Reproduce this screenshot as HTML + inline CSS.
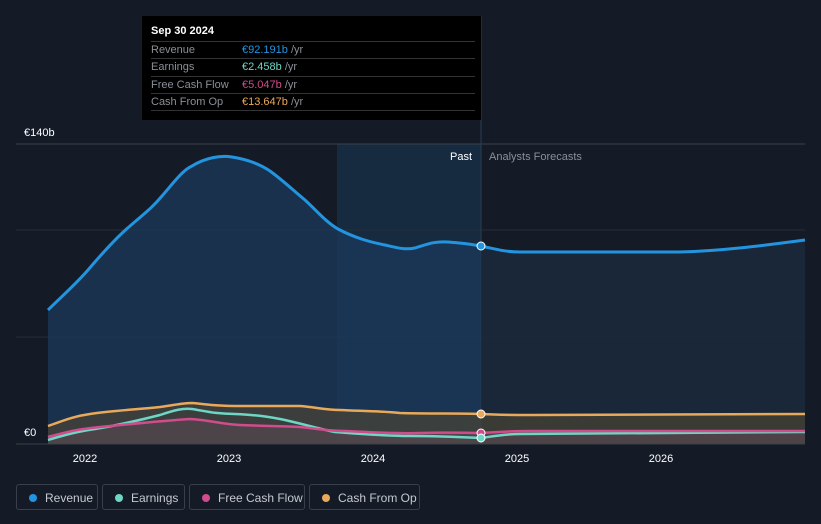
<!DOCTYPE html>
<html><head><style>
body{margin:0;width:821px;height:524px;background:#151b26;font-family:"Liberation Sans",sans-serif;overflow:hidden;position:relative}
.tt{position:absolute;left:142px;top:16px;width:339px;height:104px;background:#000;color:#fff;font-size:11px}
.tt .h{position:absolute;left:9px;top:9px;font-weight:bold}
.row{position:absolute;left:9px;width:324px;border-top:1px solid #333;height:17px;line-height:17px;color:#8a8f97}
.row span{position:absolute;left:91px}
.row i{font-style:normal;color:#8a8f97}
.lg{position:absolute;top:484px;height:26px;border:1px solid #3a404b;border-radius:3px;color:#c5c9cf;font-size:12px;line-height:26px;box-sizing:border-box}
.lg b{position:absolute;left:12px;top:9px;width:8px;height:8px;border-radius:50%}
.lg span{position:absolute;left:28px}
</style></head><body>
<svg width="821" height="524" style="position:absolute;left:0;top:0">
<rect x="337" y="144" width="144" height="300" fill="#183552" opacity="0.6"/>
<line x1="16" y1="144" x2="805" y2="144" stroke="#3a404b"/>
<line x1="16" y1="230" x2="805" y2="230" stroke="#262d38"/>
<line x1="16" y1="337" x2="805" y2="337" stroke="#262d38"/>
<line x1="481" y1="16" x2="481" y2="444" stroke="#2b3d52"/>
<path d="M48,310 C62,296 75,285 88,270 C105,250 118,236 130,226 C145,213 152,208 162,196 C175,181 183,170 192,166 C205,158 220,155 232,157 C245,159 258,163 270,171 C285,182 295,192 305,200 C318,212 326,222 338,229 C355,238 370,242 385,245 C398,248 405,250 415,248 C428,244 435,241 448,242 C462,243 470,244 481,246 L481,444 L48,444 Z" fill="#1b3a5a" opacity="0.75"/>
<path d="M481,246 C495,249 505,252 520,252 L680,252 C720,251 760,246 805,240 L805,444 L481,444Z" fill="#1a2a3d" opacity="0.8"/>
<path d="M48,426 C65,420 75,416 90,414 C110,411 130,410 160,407 C175,405 183,403 192,403 C205,404 215,406 235,406 L300,406 C315,407 325,410 340,410 C360,411 380,411 400,413 C430,414 460,413 481,414 C500,415 515,415 530,415 L805,414 L805,444 L48,444Z" fill="#4a4536" opacity="0.7"/>
<path d="M48,437 C70,431 80,429 100,427 C130,424 160,421 190,419 C210,420 220,424 240,425 C260,426 285,426 300,427 C320,429 330,431 345,431 C370,432 395,434 420,433 C450,432 465,433 481,433 C500,432 510,431 530,431 L805,431 L805,444 L48,444Z" fill="#5a4a52" opacity="0.6"/>
<path d="M48,310 C62,296 75,285 88,270 C105,250 118,236 130,226 C145,213 152,208 162,196 C175,181 183,170 192,166 C205,158 220,155 232,157 C245,159 258,163 270,171 C285,182 295,192 305,200 C318,212 326,222 338,229 C355,238 370,242 385,245 C398,248 405,250 415,248 C428,244 435,241 448,242 C462,243 470,244 481,246 C495,249 505,252 520,252 L680,252 C720,251 760,246 805,240" fill="none" stroke="#2394df" stroke-width="3"/>
<path d="M48,426 C65,420 75,416 90,414 C110,411 130,410 160,407 C175,405 183,403 192,403 C205,404 215,406 235,406 L300,406 C315,407 325,410 340,410 C360,411 380,411 400,413 C430,414 460,413 481,414 C500,415 515,415 530,415 L805,414" fill="none" stroke="#e9a95a" stroke-width="2.5"/>
<path d="M48,440 C65,435 75,432 95,429 C120,425 140,420 160,415 C175,410 183,408 192,409 C205,411 215,414 235,414 C255,415 265,416 280,419 C300,423 315,428 335,432 C360,434 385,436 410,436 C440,436 460,437 481,438 C495,436 505,434 520,434 L805,432" fill="none" stroke="#6ed6c5" stroke-width="2.5"/>
<path d="M48,437 C70,431 80,429 100,427 C130,424 160,421 190,419 C210,420 220,424 240,425 C260,426 285,426 300,427 C320,429 330,431 345,431 C370,432 395,434 420,433 C450,432 465,433 481,433 C500,432 510,431 530,431 L805,431" fill="none" stroke="#d04c8c" stroke-width="2.5"/>
<line x1="16" y1="444" x2="805" y2="444" stroke="#3a404b"/>
<circle cx="481" cy="246" r="4" fill="#2394df" stroke="#fff" stroke-width="1"/>
<circle cx="481" cy="414" r="4" fill="#e9a95a" stroke="#fff" stroke-width="1"/>
<circle cx="481" cy="433" r="4" fill="#d04c8c" stroke="#fff" stroke-width="1"/>
<circle cx="481" cy="438" r="4" fill="#6ed6c5" stroke="#fff" stroke-width="1"/>
<g font-size="11" fill="#fff">
<text x="24" y="136">€140b</text><text x="24" y="436">€0</text>
<text x="450" y="160">Past</text><text x="489" y="160" fill="#8a8f97">Analysts Forecasts</text>
<g text-anchor="middle"><text x="85" y="462">2022</text><text x="229" y="462">2023</text><text x="373" y="462">2024</text><text x="517" y="462">2025</text><text x="661" y="462">2026</text></g>
</g>
</svg>
<div class="tt"><div class="h">Sep 30 2024</div>
<div class="row" style="top:25px">Revenue<span style="color:#2394df">€92.191b <i>/yr</i></span></div>
<div class="row" style="top:42px">Earnings<span style="color:#6ed6c5">€2.458b <i>/yr</i></span></div>
<div class="row" style="top:60px">Free Cash Flow<span style="color:#d04c8c">€5.047b <i>/yr</i></span></div>
<div class="row" style="top:77px">Cash From Op<span style="color:#e9a95a">€13.647b <i>/yr</i></span></div>
<div class="row" style="top:94px;height:0"></div>
</div>
<div class="lg" style="left:16px;width:82px"><b style="background:#2394df"></b><span>Revenue</span></div>
<div class="lg" style="left:102px;width:83px"><b style="background:#6ed6c5"></b><span>Earnings</span></div>
<div class="lg" style="left:189px;width:116px"><b style="background:#d04c8c"></b><span>Free Cash Flow</span></div>
<div class="lg" style="left:309px;width:111px"><b style="background:#e9a95a"></b><span>Cash From Op</span></div>
</body></html>
